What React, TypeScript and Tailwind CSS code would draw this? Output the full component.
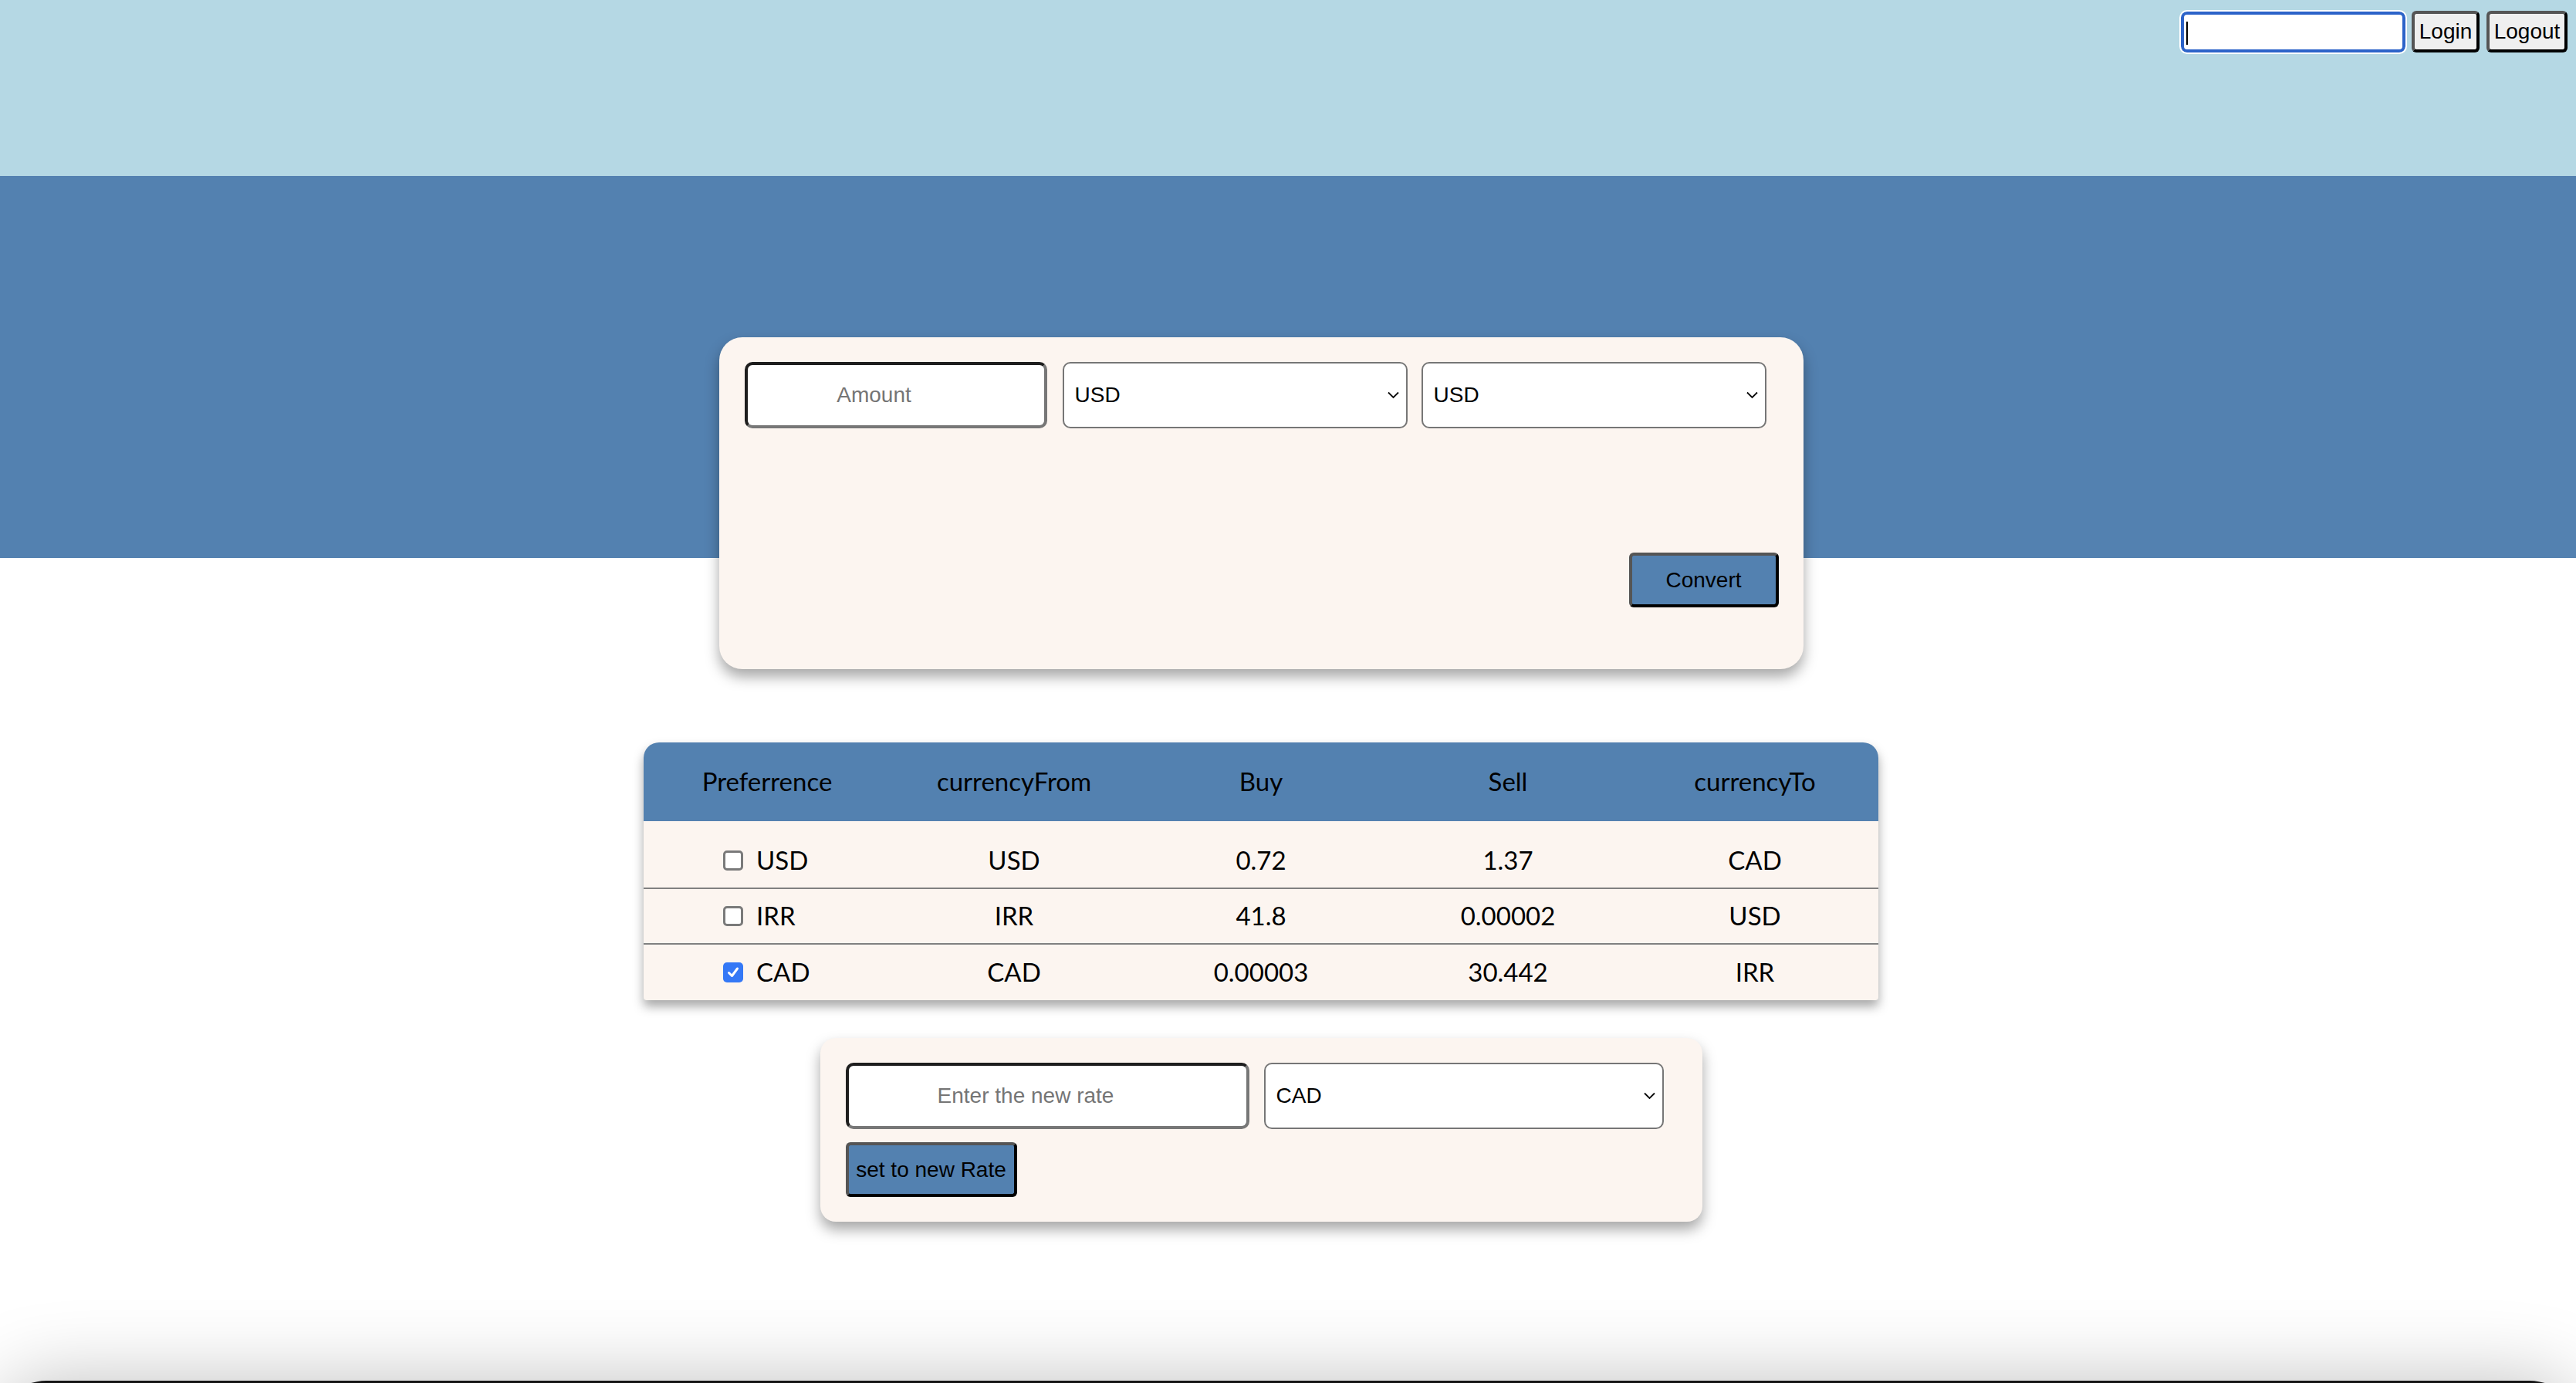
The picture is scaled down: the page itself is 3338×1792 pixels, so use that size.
import React, { useState } from 'react';

const currencies = ['USD', 'IRR', 'CAD'];

const rates = [
    { pref: 'USD', from: 'USD', buy: '0.72', sell: '1.37', to: 'CAD', checked: false },
    { pref: 'IRR', from: 'IRR', buy: '41.8', sell: '0.00002', to: 'USD', checked: false },
    { pref: 'CAD', from: 'CAD', buy: '0.00003', sell: '30.442', to: 'IRR', checked: true },
];

const Chevron: React.FC = () => (
    <svg className="absolute right-[11px] top-1/2 -translate-y-1/2 pointer-events-none" width="15" height="10" viewBox="0 0 15 10" fill="none">
        <path d="M1 1.5 L7.5 8 L14 1.5" stroke="#000" strokeWidth="1.8" />
    </svg>
);

const Select: React.FC<{ value: string; className: string }> = ({ value, className }) => (
    <div className={`relative ${className}`}>
        <select
            defaultValue={value}
            className="appearance-none w-full h-full bg-white border-2 border-[#767676] rounded-[10px] pl-[14px] text-[28px] text-black font-['Liberation_Sans',Arial,sans-serif] outline-none"
        >
            {currencies.map(c => <option key={c} value={c}>{c}</option>)}
        </select>
        <Chevron />
    </div>
);

const Checkbox: React.FC<{ checked: boolean }> = ({ checked }) => (
    checked ? (
        <span className="w-[26px] h-[26px] shrink-0 rounded-[5px] bg-[#3478f6] flex items-center justify-center">
            <svg width="18" height="18" viewBox="0 0 18 18" fill="none">
                <path d="M3.5 9.5 L7.5 13.5 L14.5 4" stroke="#fff" strokeWidth="3" strokeLinecap="round" strokeLinejoin="round" />
            </svg>
        </span>
    ) : (
        <span className="w-[26px] h-[26px] shrink-0 rounded-[5px] bg-white border-[3px] border-[#7a7a7a]" />
    )
);

const blueButton = "bg-[#5381b0] border-[4px] border-t-[#555] border-l-[#555] border-r-black border-b-black rounded-[6px] text-[28px] text-black font-['Liberation_Sans',Arial,sans-serif] flex items-center justify-center";
const insetInput = "bg-white border-[4px] border-t-[#1e1e1e] border-l-[#1e1e1e] border-r-[#777] border-b-[#777] rounded-[10px] text-[28px] text-center pl-[4px] pr-[60px] placeholder-[#757575] font-['Liberation_Sans',Arial,sans-serif] outline-none";

export default function App() {
    const [amount, setAmount] = useState('');
    const [newRate, setNewRate] = useState('');

    return (
        <div className="min-h-screen bg-white overflow-hidden font-['Lato',sans-serif]">
            <header className="h-[228px] bg-[#b5d8e4] flex justify-end items-start pt-[13px] pr-[11px]">
                <div className="relative">
                    <input
                        type="text"
                        className="w-[291px] h-[53px] m-[2px] bg-white border-[4px] border-[#2c63c9] rounded-[8px] outline-[2px] outline-white outline-solid"
                    />
                    <span className="absolute left-[9px] top-[15px] w-[2px] h-[30px] bg-black" />
                </div>
                <button className="ml-[6px] mt-[1px] w-[88px] h-[54px] bg-[#efefef] border-[4px] border-t-[#555] border-l-[#555] border-r-black border-b-black rounded-[6px] text-[28px] font-['Liberation_Sans',Arial,sans-serif] text-black">Login</button>
                <button className="ml-[9px] mt-[1px] w-[105px] h-[54px] bg-[#efefef] border-[4px] border-t-[#555] border-l-[#555] border-r-black border-b-black rounded-[6px] text-[28px] font-['Liberation_Sans',Arial,sans-serif] text-black">Logout</button>
            </header>

            <section className="bg-[linear-gradient(to_bottom,#5381b0_495px,#ffffff_495px)] pt-[209px] pr-[70px] flex flex-col items-center">
                {/* converter card */}
                <div className="w-[1405px] h-[430px] rounded-[30px] bg-[#fcf5f0] shadow-[0_10px_18px_rgba(0,0,0,0.35)] pt-[32px] pl-[33px] pr-[32px] flex flex-col">
                    <div className="flex">
                        <input
                            type="text"
                            placeholder="Amount"
                            value={amount}
                            onChange={e => setAmount(e.target.value)}
                            className={`w-[392px] h-[86px] ${insetInput}`}
                        />
                        <Select value="USD" className="ml-[20px] w-[447px] h-[86px]" />
                        <Select value="USD" className="ml-[18px] w-[447px] h-[86px]" />
                    </div>
                    <button className={`self-end mt-[161px] w-[194px] h-[71px] ${blueButton}`}>Convert</button>
                </div>

                {/* rates table */}
                <div className="mt-[95px] w-[1600px] rounded-t-[20px] rounded-b-[4px] bg-[#fcf5f0] shadow-[0_8px_14px_rgba(0,0,0,0.35)] text-[33px] text-black">
                    <div className="grid grid-cols-5 h-[102px] items-center text-center bg-[#5381b0] rounded-t-[20px]">
                        <div>Preferrence</div>
                        <div>currencyFrom</div>
                        <div>Buy</div>
                        <div>Sell</div>
                        <div>currencyTo</div>
                    </div>
                    <div className="pt-[16px]">
                        {rates.map((r, i) => (
                            <div
                                key={r.pref}
                                className={`grid grid-cols-5 h-[72px] items-center text-center ${i < rates.length - 1 ? 'border-b-2 border-[#808080]' : ''}`}
                            >
                                <div className="flex items-center gap-[17px] pl-[103px]">
                                    <Checkbox checked={r.checked} />
                                    <span>{r.pref}</span>
                                </div>
                                <div>{r.from}</div>
                                <div>{r.buy}</div>
                                <div>{r.sell}</div>
                                <div>{r.to}</div>
                            </div>
                        ))}
                    </div>
                </div>

                {/* new rate card */}
                <div className="mt-[49px] w-[1143px] rounded-[20px] bg-[#fcf5f0] shadow-[0_10px_18px_rgba(0,0,0,0.35)] pt-[32px] pl-[33px] pb-[32px]">
                    <div className="flex">
                        <input
                            type="text"
                            placeholder="Enter the new rate"
                            value={newRate}
                            onChange={e => setNewRate(e.target.value)}
                            className={`w-[523px] h-[86px] ${insetInput}`}
                        />
                        <Select value="CAD" className="ml-[19px] w-[518px] h-[86px]" />
                    </div>
                    <button className={`mt-[17px] w-[222px] h-[71px] ${blueButton}`}>set to new Rate</button>
                </div>
            </section>

            <footer className="mt-[206px] h-[200px] bg-[#151515] rounded-t-[60px] shadow-[0_0_100px_rgba(0,0,0,0.25)]" />
        </div>
    );
}
